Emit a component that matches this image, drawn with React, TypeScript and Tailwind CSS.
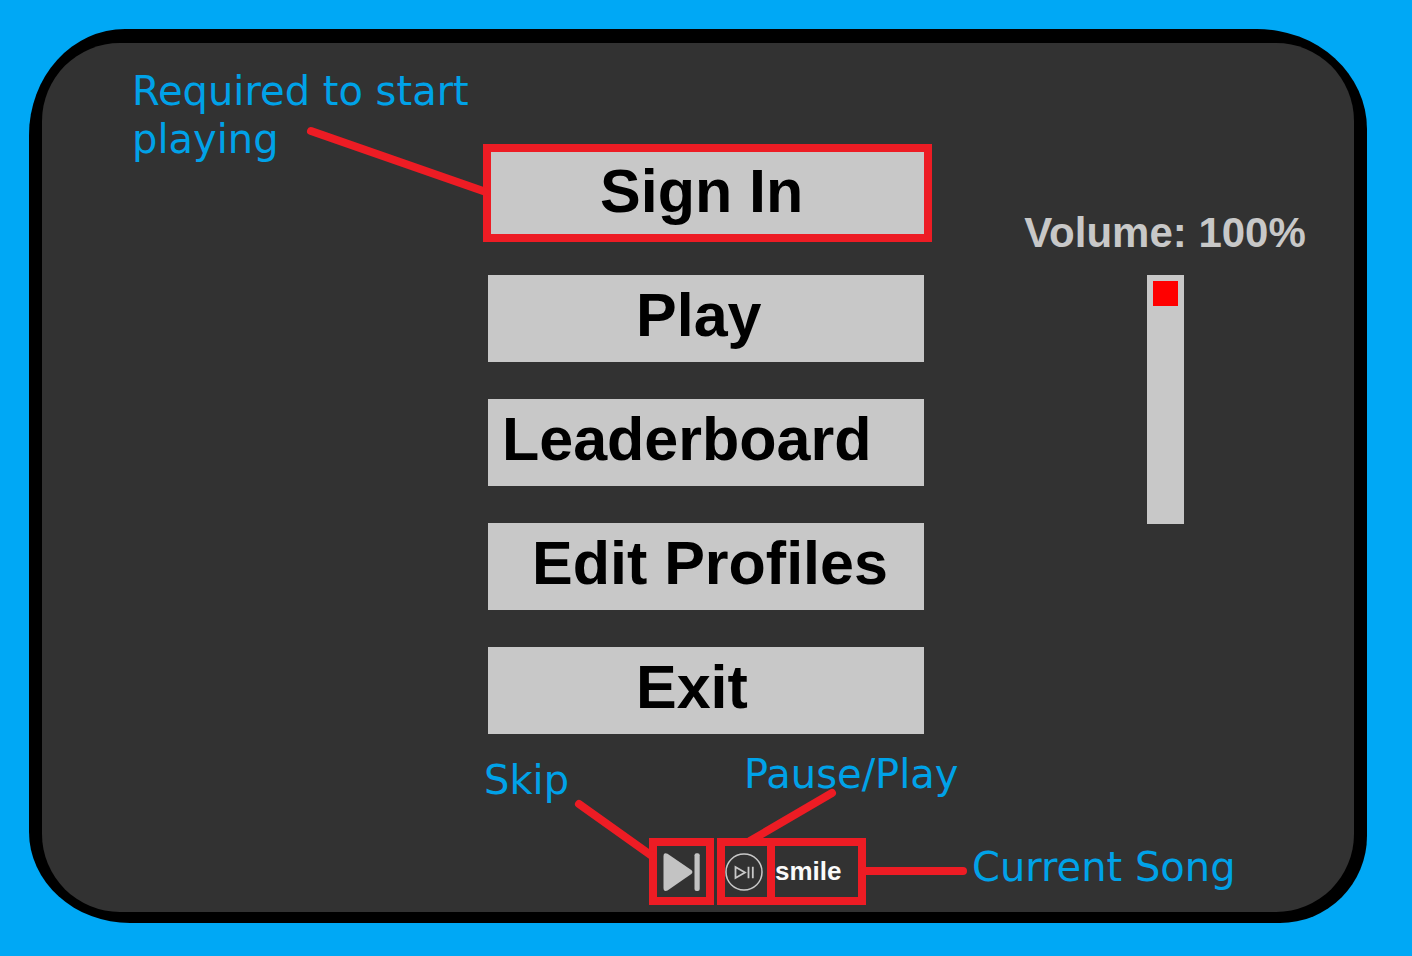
import { useState } from "react";

const menu = [
  { label: "Sign In", indent: "pl-28", highlighted: true },
  { label: "Play", indent: "pl-[148px]", highlighted: false },
  { label: "Leaderboard", indent: "pl-3.5", highlighted: false },
  { label: "Edit Profiles", indent: "pl-11", highlighted: false },
  { label: "Exit", indent: "pl-[148px]", highlighted: false },
];

const noteText =
  "whitespace-nowrap font-['DejaVu_Sans',sans-serif] text-[40px] leading-[48px] text-[#00a2e8]";

function MenuButton({ label, indent, highlighted }: (typeof menu)[number]) {
  return (
    <button
      type="button"
      className={`relative h-[87px] w-full bg-[#c8c8c8] pb-1.5 text-left text-[61px] leading-none font-bold text-black ${indent}`}
    >
      {label}
      {highlighted && (
        <span className="absolute -top-[7px] -right-2 -bottom-1 -left-[5px] border-8 border-[#ed1c24]" />
      )}
    </button>
  );
}

function SkipIcon() {
  return (
    <svg viewBox="0 0 38 38" className="size-[38px] shrink-0" fill="#c3c3c3" aria-hidden="true">
      <path d="M0.500 3.500Q0.500 -1 4.500 0.800L28.300 17Q30.500 19 28.300 21L4.500 37.500Q0.500 39 0.500 35Z" />
      <rect x="31.500" y="0.300" width="5.200" height="37.700" rx="2" />
    </svg>
  );
}

function PausePlayIcon() {
  return (
    <svg
      viewBox="0 0 38 38"
      className="size-[38px] shrink-0"
      fill="none"
      stroke="#c8c8c8"
      strokeWidth="1.5"
      aria-hidden="true"
    >
      <circle cx="19" cy="19" r="18" />
      <path d="M10.500 14V25L20 19.500Z" strokeWidth="1.800" />
      <path d="M23.500 13.800V25.200M27.800 13.800V25.200" strokeWidth="1.800" />
    </svg>
  );
}

function Callouts() {
  return (
    <svg
      className="pointer-events-none absolute inset-0 size-full overflow-visible"
      stroke="#ed1c24"
      strokeWidth="8"
      strokeLinecap="round"
      aria-hidden="true"
    >
      <line x1="-177" y1="88" x2="-2" y2="149" />
      <line x1="91" y1="761" x2="164" y2="813" />
      <line x1="344" y1="750" x2="262" y2="798" />
      <line x1="376" y1="828" x2="475" y2="828" />
    </svg>
  );
}

export default function App() {
  const [volume, setVolume] = useState(100);

  return (
    <div className="min-h-screen bg-[#00a8f5] pt-[29px] pr-[45px] pb-[33px] pl-[29px] font-['Liberation_Sans',Arial,sans-serif]">
      <div className="rounded-[96px_110px_87px_101px/106px_100px_87px_91px] bg-black px-[13px] pt-[14px] pb-[11px]">
        <main className="grid grid-cols-[1fr_436px_1fr] rounded-[78px] bg-[#323232] pl-4">
          <div className="pt-6 pl-[74px]">
            <p className={noteText}>
              Required to start
              <br />
              playing
            </p>
          </div>

          <div className="relative pt-[108px] pb-[7px]">
            <nav className="flex flex-col gap-[37px]">
              {menu.map((item) => (
                <MenuButton key={item.label} {...item} />
              ))}
            </nav>

            <div className="-ml-1 flex items-start justify-between pt-4">
              <p className={`${noteText} pt-1.5`}>Skip</p>
              <p className={`${noteText} w-[180px]`}>Pause/Play</p>
            </div>

            <div className="flex pt-[34px] pl-[161px]">
              <button
                type="button"
                aria-label="Skip"
                className="flex h-[67px] w-[65px] items-center justify-center border-8 border-[#ed1c24]"
              >
                <SkipIcon />
              </button>
              <button
                type="button"
                aria-label="Pause or play"
                className="ml-[3px] flex h-[67px] w-[58px] items-center border-8 border-[#ed1c24]"
              >
                <PausePlayIcon />
              </button>
              <p className="-ml-2 flex h-[67px] w-[99px] items-center border-8 border-[#ed1c24] pb-0.5 text-[26px] leading-none font-bold text-[#fafafa]">
                smile
              </p>
            </div>
            <Callouts />
          </div>

          <div className="flex flex-col justify-between">
            <div className="flex flex-col items-center pt-[166px] pl-13">
              <label
                htmlFor="volume"
                className="text-[42px] leading-[48px] font-bold whitespace-nowrap text-[#c8c8c8]"
              >
                Volume: {volume}%
              </label>
              <input
                id="volume"
                type="range"
                min={0}
                max={100}
                value={volume}
                onChange={(event) => setVolume(Number(event.target.value))}
                className="mt-[18px] h-[249px] w-[37px] appearance-none bg-[#c8c8c8] p-1.5 [direction:rtl] [writing-mode:vertical-lr] [&::-webkit-slider-thumb]:size-[25px] [&::-webkit-slider-thumb]:appearance-none [&::-webkit-slider-thumb]:bg-[#ff0000]"
              />
            </div>
            <p className={`${noteText} pb-[21px] pl-12`}>Current Song</p>
          </div>
        </main>
      </div>
    </div>
  );
}
